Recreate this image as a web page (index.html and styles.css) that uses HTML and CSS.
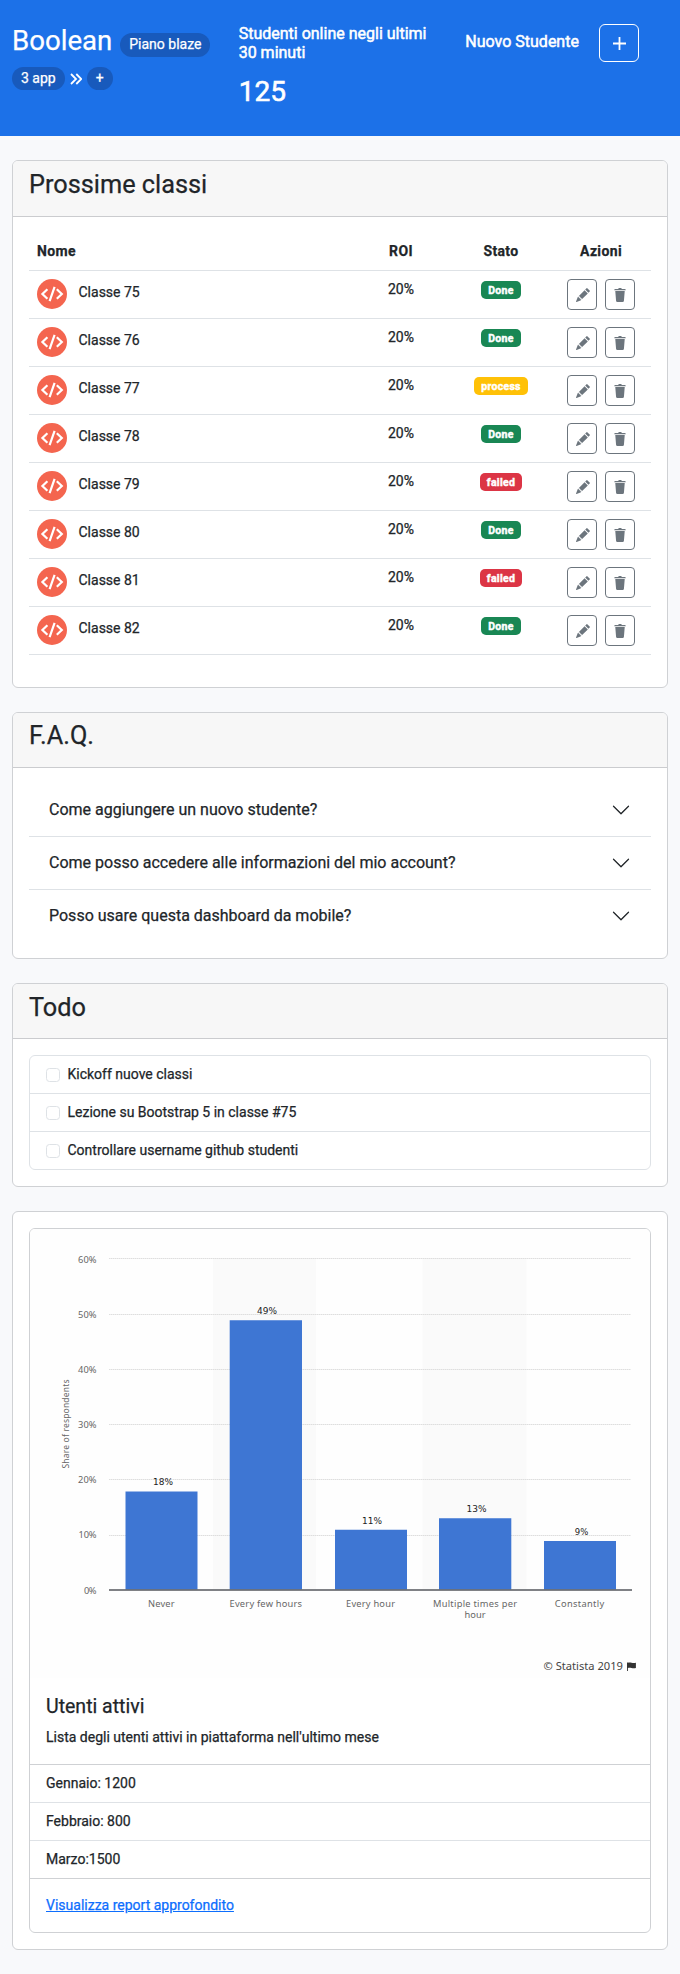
FILE: index.html
```html
<!DOCTYPE html>
<html lang="it">
<head>
<meta charset="utf-8">
<title>Boolean Dashboard</title>
<link rel="stylesheet" href="styles.css">
</head>
<body>
<svg class="sprite" aria-hidden="true">
  <symbol id="code" viewBox="0 0 30 30"><circle cx="15" cy="15" r="15" fill="#f4654f"/><path d="M10.400 10.200 5.400 15l5 4.800M19.800 10.200l5 4.800-5 4.800M17.600 7.900l-5 14.200" fill="none" stroke="#fff" stroke-width="2.2"/></symbol>
  <symbol id="pencil" viewBox="0 0 16 16"><path d="M12.854.146a.5.5 0 0 0-.707 0L10.5 1.793 14.207 5.5l1.647-1.646a.5.5 0 0 0 0-.708zm.646 6.061L9.793 2.5 3.293 9H3.5a.5.5 0 0 1 .5.5v.5h.5a.5.5 0 0 1 .5.5v.5h.5a.5.5 0 0 1 .5.5v.5h.5a.5.5 0 0 1 .5.5v.207zm-7.468 7.468A.5.5 0 0 1 6 13.5V13h-.5a.5.5 0 0 1-.5-.5V12h-.5a.5.5 0 0 1-.5-.5V11h-.5a.5.5 0 0 1-.5-.5V10h-.5a.5.5 0 0 1-.175-.032l-.179.178a.5.5 0 0 0-.11.168l-2 5a.5.5 0 0 0 .65.65l5-2a.5.5 0 0 0 .168-.11z"/></symbol>
  <symbol id="trash" viewBox="0 0 16 16"><path d="M2.5 1a1 1 0 0 0-1 1v.6h13V2a1 1 0 0 0-1-1H10a1 1 0 0 0-1-1H7a1 1 0 0 0-1 1zM2.600 3.500l.9 11A1.6 1.6 0 0 0 5.100 16h5.800a1.6 1.6 0 0 0 1.600-1.500l.9-11z"/></symbol>
  <symbol id="chevron" viewBox="0 0 16 16"><path fill-rule="evenodd" d="M1.646 4.646a.5.5 0 0 1 .708 0L8 10.293l5.646-5.647a.5.5 0 0 1 .708.708l-6 6a.5.5 0 0 1-.708 0l-6-6a.5.5 0 0 1 0-.708z"/></symbol>
</svg>

<header class="topbar">
  <div class="brand">
    <div class="brand-row"><h1>Boolean</h1><span class="pill plan">Piano blaze</span></div>
    <div class="app-row"><span class="pill">3 app</span><svg class="more" viewBox="0 0 12 12"><path d="M1 1l5 5-5 5M6.300 1l5 5-5 5"/></svg><span class="pill add">+</span></div>
  </div>
  <div class="online">
    <h2>Studenti online negli ultimi 30 minuti</h2>
    <p class="count">125</p>
  </div>
  <div class="new-student">
    <h2>Nuovo Studente</h2>
    <button class="btn-new" aria-label="Aggiungi"><svg viewBox="0 0 13 13"><path d="M6.500 0v13M0 6.500h13"/></svg></button>
  </div>
</header>

<main>
  <section class="card classes">
    <div class="card-header"><h3>Prossime classi</h3></div>
    <div class="card-body">
      <table>
        <thead><tr><th class="name">Nome</th><th>ROI</th><th>Stato</th><th>Azioni</th></tr></thead>
        <tbody>
          <tr><td class="name"><div class="class-name"><svg><use href="#code"/></svg>Classe 75</div></td><td>20%</td><td><span class="badge done">Done</span></td><td><div class="actions"><button><svg class="pencil"><use href="#pencil"/></svg></button><button><svg><use href="#trash"/></svg></button></div></td></tr>
          <tr><td class="name"><div class="class-name"><svg><use href="#code"/></svg>Classe 76</div></td><td>20%</td><td><span class="badge done">Done</span></td><td><div class="actions"><button><svg class="pencil"><use href="#pencil"/></svg></button><button><svg><use href="#trash"/></svg></button></div></td></tr>
          <tr><td class="name"><div class="class-name"><svg><use href="#code"/></svg>Classe 77</div></td><td>20%</td><td><span class="badge process">process</span></td><td><div class="actions"><button><svg class="pencil"><use href="#pencil"/></svg></button><button><svg><use href="#trash"/></svg></button></div></td></tr>
          <tr><td class="name"><div class="class-name"><svg><use href="#code"/></svg>Classe 78</div></td><td>20%</td><td><span class="badge done">Done</span></td><td><div class="actions"><button><svg class="pencil"><use href="#pencil"/></svg></button><button><svg><use href="#trash"/></svg></button></div></td></tr>
          <tr><td class="name"><div class="class-name"><svg><use href="#code"/></svg>Classe 79</div></td><td>20%</td><td><span class="badge failed">failed</span></td><td><div class="actions"><button><svg class="pencil"><use href="#pencil"/></svg></button><button><svg><use href="#trash"/></svg></button></div></td></tr>
          <tr><td class="name"><div class="class-name"><svg><use href="#code"/></svg>Classe 80</div></td><td>20%</td><td><span class="badge done">Done</span></td><td><div class="actions"><button><svg class="pencil"><use href="#pencil"/></svg></button><button><svg><use href="#trash"/></svg></button></div></td></tr>
          <tr><td class="name"><div class="class-name"><svg><use href="#code"/></svg>Classe 81</div></td><td>20%</td><td><span class="badge failed">failed</span></td><td><div class="actions"><button><svg class="pencil"><use href="#pencil"/></svg></button><button><svg><use href="#trash"/></svg></button></div></td></tr>
          <tr><td class="name"><div class="class-name"><svg><use href="#code"/></svg>Classe 82</div></td><td>20%</td><td><span class="badge done">Done</span></td><td><div class="actions"><button><svg class="pencil"><use href="#pencil"/></svg></button><button><svg><use href="#trash"/></svg></button></div></td></tr>
        </tbody>
      </table>
    </div>
  </section>

  <section class="card">
    <div class="card-header"><h3>F.A.Q.</h3></div>
    <div class="card-body faq">
      <div class="question"><span>Come aggiungere un nuovo studente?</span><svg><use href="#chevron"/></svg></div>
      <div class="question"><span>Come posso accedere alle informazioni del mio account?</span><svg><use href="#chevron"/></svg></div>
      <div class="question"><span>Posso usare questa dashboard da mobile?</span><svg><use href="#chevron"/></svg></div>
    </div>
  </section>

  <section class="card tasks">
    <div class="card-header"><h3>Todo</h3></div>
    <div class="card-body">
      <ul class="todo">
        <li><label><input type="checkbox">Kickoff nuove classi</label></li>
        <li><label><input type="checkbox">Lezione su Bootstrap 5 in classe #75</label></li>
        <li><label><input type="checkbox">Controllare username github studenti</label></li>
      </ul>
    </div>
  </section>

  <section class="card">
    <div class="card-body">
      <div class="card report">
        <svg class="chart" viewBox="30 1229 620 449">
          <rect x="30" y="1229" width="620" height="449" fill="#fefefe"/>
          <path d="M213 1258h103v331H213zM422.500 1258h104v331h-104z" fill="#fafafa"/>
          <path class="grid" d="M109 1258.500h522M109 1314.500h522M109 1369.500h522M109 1424.500h522M109 1479.500h522M109 1535.500h522"/>
          <path d="M125.500 1491.500h72v98h-72zM229.700 1320.200h72.300v269.300h-72.300zM335 1529.800h72v59.700h-72zM439 1518.300h72.300v71.200H439zM544 1541h72v48.500h-72z" fill="#3e76d3"/>
          <path d="M109 1590h523" stroke="#55575c" stroke-width="1.500"/>
          <g class="tick" text-anchor="end">
            <text x="96.500" y="1262.500" textLength="18.500">60%</text>
            <text x="96.500" y="1317.500" textLength="18.500">50%</text>
            <text x="96.500" y="1373" textLength="18.500">40%</text>
            <text x="96.500" y="1428" textLength="18.500">30%</text>
            <text x="96.500" y="1483" textLength="18.500">20%</text>
            <text x="96.500" y="1538" textLength="18">10%</text>
            <text x="96.500" y="1594" textLength="12.500">0%</text>
          </g>
          <g class="value">
            <text x="163" y="1485" textLength="20" lengthAdjust="spacingAndGlyphs">18%</text>
            <text x="267" y="1314" textLength="20" lengthAdjust="spacingAndGlyphs">49%</text>
            <text x="372" y="1523.500" textLength="20" lengthAdjust="spacingAndGlyphs">11%</text>
            <text x="476.500" y="1512" textLength="20" lengthAdjust="spacingAndGlyphs">13%</text>
            <text x="581.500" y="1535" textLength="13.500" lengthAdjust="spacingAndGlyphs">9%</text>
          </g>
          <g class="tick mid">
            <text x="161.300" y="1607" textLength="26.500">Never</text>
            <text x="265.800" y="1607" textLength="72.500">Every few hours</text>
            <text x="370.500" y="1607" textLength="49">Every hour</text>
            <text x="475" y="1607" textLength="84">Multiple times per</text>
            <text x="475" y="1617.500" textLength="21">hour</text>
            <text x="579.500" y="1607" textLength="49.500">Constantly</text>
            <text class="axis" transform="translate(69 1424) rotate(-90)" textLength="89">Share of respondents</text>
          </g>
          <text class="credit" x="543.500" y="1670" textLength="79.500" lengthAdjust="spacingAndGlyphs">© Statista 2019</text>
          <path d="M627 1662.500v8.500h.9v-3c2.500-1 4.500 1 8 0v-5.200c-3.500 1-5.500-1-8 0v-.3z" fill="#333"/>
        </svg>
        <div class="report-body">
          <h4>Utenti attivi</h4>
          <p>Lista degli utenti attivi in piattaforma nell'ultimo mese</p>
        </div>
        <ul class="months"><li>Gennaio: 1200</li><li>Febbraio: 800</li><li>Marzo:1500</li></ul>
        <div class="report-link"><a href="#">Visualizza report approfondito</a></div>
      </div>
    </div>
  </section>
</main>
</body>
</html>
```
FILE: styles.css
```css
* { box-sizing: border-box; }
body { margin: 0; background: #f8f9fb; color: #212529; font: 14px/21px Roboto, sans-serif; -webkit-text-stroke: .25px; }
h1, h2, h3, h4, p, ul { margin: 0; padding: 0; }
ul { list-style: none; }
button { padding: 0; background: none; }
.sprite { position: absolute; width: 0; height: 0; }

.topbar { display: grid; grid-template-columns: repeat(3, 1fr); height: 136px; padding-top: 24px; background: #1c71e8; color: #fff; }
.topbar > div { padding: 0 12px; }
.brand-row { display: flex; align-items: center; height: 34px; }
h1 { font-size: 27.6px; font-weight: 400; line-height: 34px; }
.pill { height: 23px; padding: 0 9px; border-radius: 12px; background: #185abc; line-height: 23px; }
.plan { height: 24px; margin: 8px 0 0 8px; }
.app-row { display: flex; align-items: center; margin-top: 9px; }
.more { width: 12px; height: 12px; margin: 0 5px; fill: none; stroke: #fff; stroke-width: 1.8; }
.topbar h2 { font-size: 16px; font-weight: 400; line-height: 19px; -webkit-text-stroke: .5px; }
.count { margin-top: 13px; font-size: 28px; line-height: 34px; -webkit-text-stroke: .6px; }
.new-student { display: flex; }
.new-student h2 { margin-top: 8px; white-space: nowrap; }
.btn-new { display: grid; place-items: center; width: 40px; height: 38px; margin-left: auto; margin-right: 29px; border: 1px solid #fff; border-radius: 6px; }
.btn-new svg { width: 13px; height: 13px; stroke: #fff; stroke-width: 1.8; }

main { display: grid; gap: 24px; padding: 24px 12px; }
.card { border: 1px solid #cfd1d4; border-radius: 6px; background: #fff; overflow: hidden; }
.card-header { height: 55px; padding-top: 8px; border-bottom: 1px solid #cbcccf; background: #f7f7f7; }
.classes .card-header { height: 56px; padding-top: 9px; }
.tasks .card-header { padding-top: 9px; }
h3 { padding: 0 16px; font-size: 25.3px; font-weight: 400; line-height: 29px; }
.card-body { padding: 16px; }

table { width: 100%; margin-bottom: 16px; table-layout: fixed; border-collapse: separate; border-spacing: 0; text-align: center; }
th, td { padding: 8px; border-bottom: 1px solid #dee2e6; vertical-align: top; width: 100px; }
th { font-weight: 700; letter-spacing: .35px; }
.name { width: auto; text-align: left; }
td { height: 48px; }
.class-name { display: flex; gap: 11.5px; line-height: 27px; }
.class-name svg { width: 30px; height: 30px; }
.badge { display: block; width: fit-content; height: 18px; margin: 2px auto 0; padding: 0 7px; border-radius: 5px; color: #fff; font-size: 10.5px; font-weight: 700; line-height: 19px; letter-spacing: .3px; -webkit-text-stroke: .45px; }
.done { background: #198754; }
.process { background: #ffc107; }
.failed { background: #dc3545; }
.actions { display: flex; gap: 8px; margin-left: 8px; }
.actions button { display: grid; place-items: center; width: 30px; height: 31px; border: 1px solid #6c757d; border-radius: 4px; }
.actions svg { width: 14px; height: 14px; fill: #6c757d; }
.actions .pencil { margin-left: 2px; }

.question { display: flex; justify-content: space-between; align-items: center; height: 53px; padding: 0 20px; font-size: 16px; border-bottom: 1px solid #dee2e6; }
.question:last-child { height: 52px; border: 0; }
.question span { padding-bottom: 2px; }
.question svg { width: 20px; height: 20px; fill: #212529; }

.todo { border: 1px solid #dee2e6; border-radius: 6px; }
.todo li { height: 38px; padding: 8px 16px; border-bottom: 1px solid #dee2e6; }
.todo li:last-child { height: 37px; border: 0; }
.todo label { display: flex; gap: 7.5px; }
.todo input { appearance: none; width: 14px; height: 14px; margin: 4px 0 0; border: 1px solid #dee2e6; border-radius: 3.5px; }

.chart { display: block; width: 620px; height: 449px; font-family: "Noto Sans", sans-serif; -webkit-text-stroke: 0; }
.grid { stroke: #dedede; stroke-dasharray: 1.5 .5; }
.tick { fill: #666; font-size: 9.3px; }
.mid, .value { text-anchor: middle; }
.value { fill: #222; font-family: "DejaVu Sans", sans-serif; font-size: 9px; }
.axis { font-size: 8.5px; }
.credit { fill: #444; font-size: 11.5px; }
.report-body { height: 86px; padding: 17px 16px; }
h4 { margin-bottom: 9px; font-size: 19.5px; font-weight: 400; line-height: 23px; }
.months { border-top: 1px solid #cfd1d4; border-bottom: 1px solid #cfd1d4; }
.months li { height: 38px; padding: 8px 16px; border-bottom: 1px solid #dee2e6; }
.months li:last-child { height: 37px; border: 0; }
.report-link { height: 53px; padding: 16px; }
a { color: #0d6efd; }
```
